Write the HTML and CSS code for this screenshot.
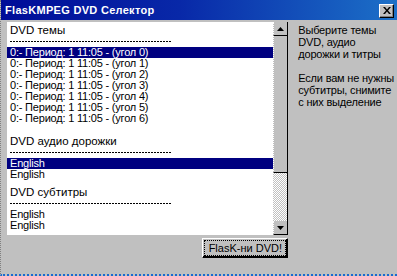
FILE: index.html
```html
<!DOCTYPE html>
<html lang="ru">
<head>
    <meta charset="UTF-8">
    <title>FlasKMPEG DVD Селектор</title>
    <link rel="stylesheet" href="styles.css">
</head>
<body>
    <div class="window">
        <div class="titlebar">
            <span class="title">FlasKMPEG DVD Селектор</span>
            <button class="close-button">
                <svg width="8" height="7" viewBox="0 0 8 7">
                    <path d="M0 0h2l2 2.5 2-2.5h2l-3 3.5 3 3.5h-2l-2-2.5-2 2.5h-2l3-3.5z" fill="#000"/>
                </svg>
            </button>
        </div>

        <div class="content">
            <div class="left-column">
                <div class="listbox">
                    <div class="list-items">
                        <div class="row group-label">DVD темы</div>
                        <div class="row"><div class="dashes"></div></div>
                        <div class="row selected">0:- Период: 1 11:05 - (угол 0)</div>
                        <div class="row">0:- Период: 1 11:05 - (угол 1)</div>
                        <div class="row">0:- Период: 1 11:05 - (угол 2)</div>
                        <div class="row">0:- Период: 1 11:05 - (угол 3)</div>
                        <div class="row">0:- Период: 1 11:05 - (угол 4)</div>
                        <div class="row">0:- Период: 1 11:05 - (угол 5)</div>
                        <div class="row">0:- Период: 1 11:05 - (угол 6)</div>

                        <div class="row group-label second">DVD аудио дорожки</div>
                        <div class="row"><div class="dashes"></div></div>
                        <div class="row selected">English</div>
                        <div class="row">English</div>

                        <div class="row group-label third">DVD субтитры</div>
                        <div class="row"><div class="dashes"></div></div>
                        <div class="row">English</div>
                        <div class="row">English</div>
                    </div>
                    <div class="scrollbar">
                        <div class="scroll-btn">
                            <svg width="7" height="4" viewBox="0 0 7 4"><path d="M3.5 0L7 4H0z" fill="#000"/></svg>
                        </div>
                        <div class="scroll-thumb"></div>
                        <div class="scroll-track"></div>
                        <div class="scroll-btn">
                            <svg width="7" height="4" viewBox="0 0 7 4"><path d="M0 0h7L3.5 4z" fill="#000"/></svg>
                        </div>
                    </div>
                </div>
                <div class="button-row">
                    <button class="go-button"><span class="focus">FlasK-ни DVD!</span></button>
                </div>
            </div>

            <div class="help-text">
                <p>Выберите темы DVD, аудио дорожки и титры</p>
                <p>Если вам не нужны субтитры, снимите с них выделение</p>
            </div>
        </div>
    </div>
</body>
</html>
```

FILE: styles.css
```css
body {
    margin: 0;
    font-family: "Liberation Sans", Arial, sans-serif;
    font-size: 11px;
    background: #c0c0c0;
    color: #000;
}

.window {
    width: 397px;
    height: 276px;
    box-sizing: border-box;
    border-left: 1px dotted #808080;
    border-bottom: 2px dotted #1a6ad0;
    display: flex;
    flex-direction: column;
}

.titlebar {
    height: 20px;
    display: flex;
    align-items: center;
    justify-content: space-between;
    padding: 0 3px 0 4px;
    background: linear-gradient(to right, #000c98 0%, #0828a8 45%, #1c70c8 100%);
}

.title {
    color: #fff;
    font-weight: bold;
    font-size: 11px;
    letter-spacing: 0.3px;
}

.close-button {
    width: 15px;
    height: 14px;
    padding: 0;
    margin-top: 1px;
    display: flex;
    align-items: center;
    justify-content: center;
    background: #c0c0c0;
    border: 1px solid;
    border-color: #fff #000 #000 #fff;
    box-shadow: inset -1px -1px #808080;
}

.content {
    display: flex;
    padding: 2px 0 0 6px;
}

.left-column {
    display: flex;
    flex-direction: column;
    width: 285px;
}

.listbox {
    display: flex;
    height: 213px;
}

.list-items {
    flex: 1;
    background: #fff;
    padding-top: 3px;
    overflow: hidden;
}

.row {
    height: 11px;
    line-height: 11px;
    padding-left: 3px;
    white-space: nowrap;
    display: flex;
    align-items: center;
    letter-spacing: -0.2px;
}

.group-label {
    font-size: 11.5px;
    letter-spacing: 0;
}

.group-label.second {
    margin-top: 12px;
}

.group-label.third {
    margin-top: 7px;
}

.selected {
    background: #000080;
    color: #fff;
}

.dashes {
    width: 162px;
    height: 1px;
    background: repeating-linear-gradient(to right, #000 0 2px, transparent 2px 3px);
}

.scrollbar {
    width: 14px;
    display: flex;
    flex-direction: column;
    border-right: 1px solid #000;
}

.scroll-btn {
    height: 14px;
    box-sizing: border-box;
    display: flex;
    align-items: center;
    justify-content: center;
    background: #c0c0c0;
    border-left: 1px dotted #fff;
    border-bottom: 1px solid #000;
}

.scroll-thumb {
    height: 137px;
    box-sizing: border-box;
    background: #c0c0c0;
    border-left: 1px dotted #fff;
    border-bottom: 1px solid #000;
}

.scroll-track {
    flex: 1;
    background: repeating-conic-gradient(#c0c0c0 0 25%, #fff 0 50%) 0 0 / 2px 2px;
}

.button-row {
    display: flex;
    justify-content: flex-end;
    margin-top: 3px;
}

.go-button {
    width: 86px;
    height: 20px;
    padding: 1px;
    font-family: inherit;
    font-size: 11px;
    background: #c0c0c0;
    border: 1px solid;
    border-color: #fff #000 #000 #fff;
    box-shadow: inset -1px -1px #000;
    display: flex;
}

.focus {
    flex: 1;
    display: flex;
    align-items: center;
    justify-content: center;
    border: 1px dotted #000;
}

.help-text {
    padding: 2px 0 0 10px;
    width: 100px;
    line-height: 12px;
    letter-spacing: -0.2px;
}

.help-text p {
    margin: 0 0 12px;
}
```
